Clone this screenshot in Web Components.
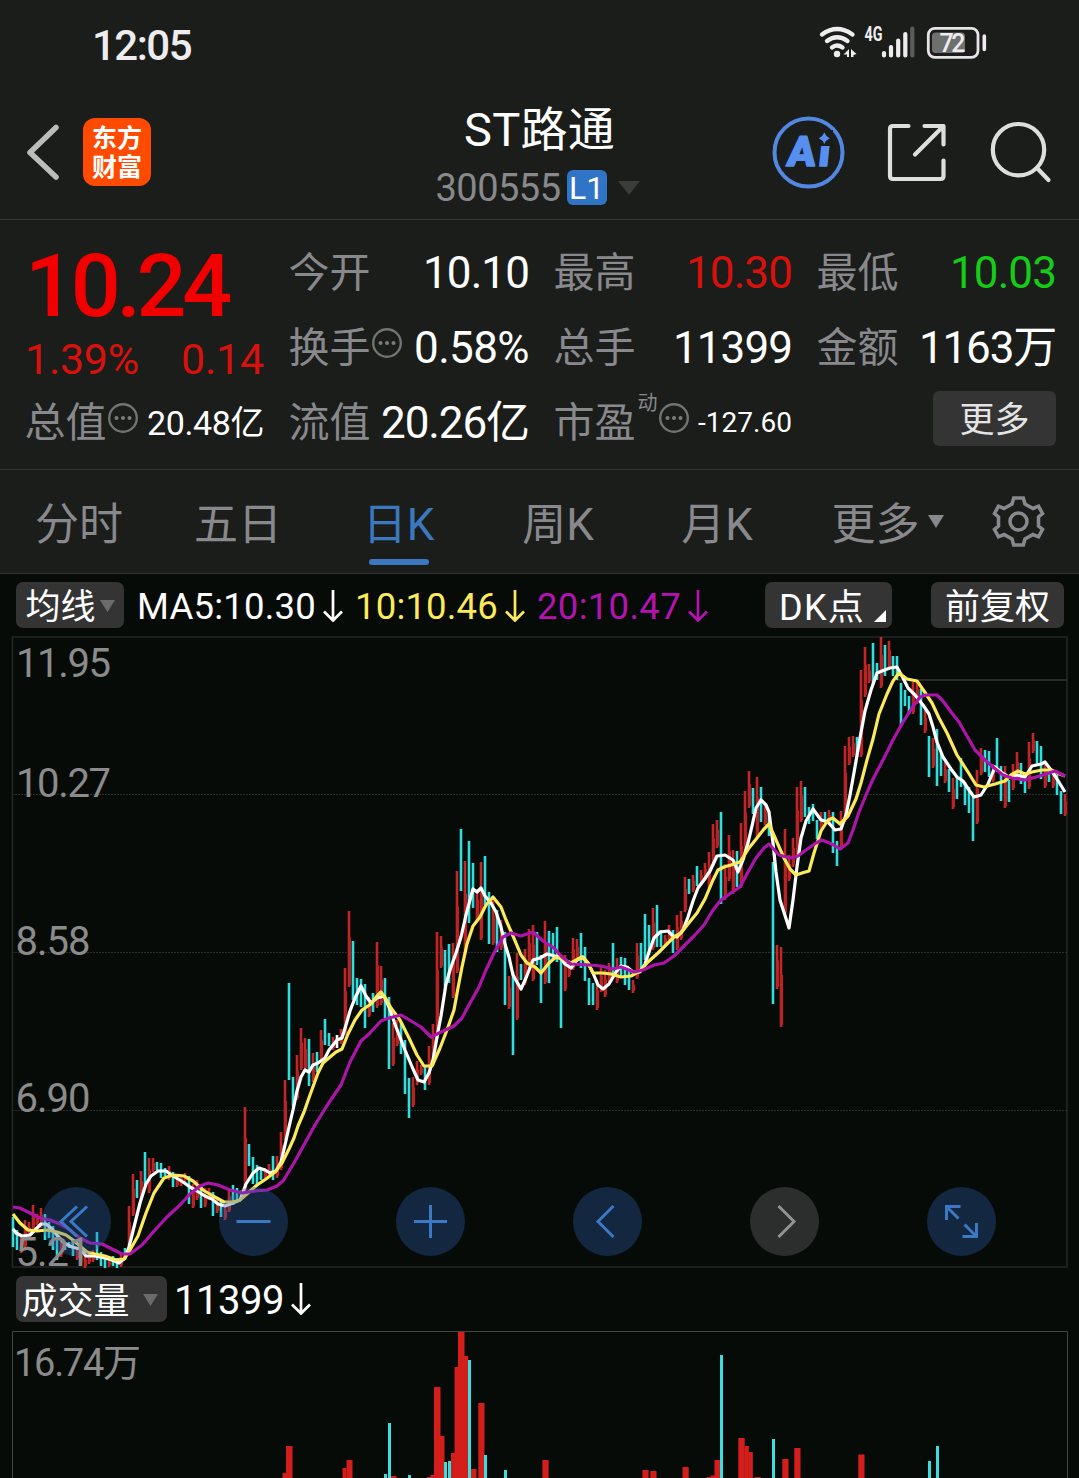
<!DOCTYPE html>
<html lang="zh-CN">
<head>
<meta charset="utf-8">
<title>ST路通 300555</title>
<style>
  body {
    margin: 0;
    background: #1a1d1a;
    color: #fff;
    font-family: Roboto, "Noto Sans CJK SC", sans-serif;
    overflow: hidden;
  }
</style>
</head>
<body>
<stock-app></stock-app>

<script>
/**
 * Creates a template from a html string.
 *
 * @param {string} html the markup and styles.
 * @returns {HTMLTemplateElement} the template.
 */
function makeTemplate (html) {
  const template = document.createElement('template')
  template.innerHTML = html
  return template
}

/**
 * Base class, clones the template of the sub class into a shadow root.
 */
class BaseElement extends HTMLElement {
  constructor () {
    super()
    this.attachShadow({ mode: 'open' })
      .appendChild(this.constructor.template.content.cloneNode(true))
  }
}

/**
 * fit-text: spreads its text over a given width with letter spacing.
 */
customElements.define('fit-text',
  class extends BaseElement {
    static template = makeTemplate(`
      <style>
        :host { display: inline-block; flex: none; white-space: nowrap; }
        span { display: inline-block; }
      </style>
      <span><slot></slot></span>
    `)

    connectedCallback () {
      const width = Number(this.getAttribute('w'))
      const span = this.shadowRoot.querySelector('span')
      const natural = span.getBoundingClientRect().width
      const count = this.textContent.length
      span.style.letterSpacing = ((width - natural) / count) + 'px'
      this.style.width = width + 'px'
    }
  }
)

/**
 * status-bar: clock, wifi, signal and battery.
 */
customElements.define('status-bar',
  class extends BaseElement {
    static template = makeTemplate(`
      <style>
        :host {
          display: flex;
          justify-content: space-between;
          height: 88px;
          padding: 0 88px 0 92px;
          color: #efecef;
        }
        .time { font-size: 42px; font-weight: 500; line-height: 91px; }
        svg { display: block; }
        text { font-family: Roboto, sans-serif; fill: #efecef; }
      </style>
      <fit-text class="time" w="99">12:05</fit-text>
      <svg width="179" height="88" viewBox="812 0 179 88" fill="none">
        <g stroke="#efecef" stroke-width="4.4" stroke-linecap="round">
          <path d="M822 34.5Q837 23.500 852.500 34.500"/>
          <path d="M827 41Q837 33.500 847.500 41"/>
          <path d="M832 47.500Q837 43.500 842.500 47.500"/>
        </g>
        <circle cx="837" cy="54" r="3.2" fill="#efecef"/>
        <path d="M843.500 54.500l5.500-5.500v8h-2v-2.500zM851 49l5.500 5-3 1v2h-2.500z" fill="#efecef"/>
        <text x="864.500" y="41" font-size="19.500" font-weight="700" textLength="18" lengthAdjust="spacingAndGlyphs">4G</text>
        <g stroke="#efecef" stroke-width="4.200" stroke-linecap="round">
          <path d="M884 53v2.500M891 47v8.500M898.200 40.500v15M905.300 34v21.500"/>
          <path d="M912.300 28.500v27" stroke="#5b5d5b"/>
        </g>
        <rect x="928.300" y="28.300" width="49.700" height="29" rx="6.500" stroke="#e6e4e6" stroke-width="2.800"/>
        <rect x="932" y="32.500" width="33" height="20.500" rx="3.500" fill="#6e706e"/>
        <path d="M984.300 36v13.500" stroke="#efecef" stroke-width="3.600" stroke-linecap="round"/>
        <text x="939.500" y="52" font-size="25" font-weight="500" textLength="26">72</text>
      </svg>
    `)
  }
)

/**
 * nav-bar: back, logo, stock name and tools.
 */
customElements.define('nav-bar',
  class extends BaseElement {
    static template = makeTemplate(`
      <style>
        :host {
          display: grid;
          grid-template-columns: 400px 1fr 400px;
          height: 131px;
          border-bottom: 1px solid #353735;
          box-sizing: content-box;
        }
        svg { display: block; }
        .left { display: flex; align-items: flex-start; }
        .logo {
          width: 68px;
          height: 68px;
          margin: 30px 0 0 19px;
          box-sizing: border-box;
          padding-top: 3.500px;
          border-radius: 12px;
          background: #ff4a02;
          font: 700 25px/29px "Noto Sans CJK SC", sans-serif;
          text-align: center;
        }
        .middle { display: flex; flex-direction: column; align-items: center; }
        .name { font-size: 47px; line-height: 60px; margin-top: 12px; }
        .code {
          display: flex;
          align-items: center;
          margin-top: 6px;
          height: 44px;
          font-size: 38px;
          line-height: 44px;
          color: #88888d;
        }
        .code fit-text { margin-left: -4px; }
        .level {
          width: 40px;
          height: 35px;
          margin: -2px 11px 0 6px;
          border-radius: 6px;
          background: #2f74c5;
          color: #fff;
          font-size: 32px;
          line-height: 36px;
          text-align: center;
        }
        .right { display: flex; justify-content: flex-end; }
        text { font: 900 42px Roboto, sans-serif; fill: #568ff0; stroke: #568ff0; stroke-width: 1.400; stroke-linejoin: round; }
      </style>
      <div class="left">
        <svg width="64" height="131" viewBox="0 88 64 131" fill="none">
          <path d="M56 127.500L30 152.500l26 24.500" stroke="#bcbcbc" stroke-width="5.500" stroke-linecap="round" stroke-linejoin="round"/>
        </svg>
        <div class="logo">东方<br>财富</div>
      </div>
      <div class="middle">
        <fit-text class="name" w="151">ST路通</fit-text>
        <div class="code">
          <fit-text w="125">300555</fit-text>
          <span class="level">L1</span>
          <svg width="22" height="14"><path d="M0 0h22l-11 14z" fill="#3b3c3b"/></svg>
        </div>
      </div>
      <div class="right">
        <svg width="320" height="131" viewBox="759 88 320 131" fill="none">
          <circle cx="808.500" cy="152.500" r="34" stroke="#5288e2" stroke-width="4"/>
          <text x="803.500" y="166" textLength="43" transform="skewX(-6)">Ai</text>
          <path d="M815 130h18v16h-18z" fill="#1a1d1a"/>
          <path d="M824.300 132.500q1.500 4 5.500 5.800q-4 1.800-5.500 5.800q-1.500-4-5.500-5.800q4-1.800 5.500-5.800z" fill="#568ff0"/>
          <g stroke="#dedede" stroke-width="4.200" stroke-linecap="round" stroke-linejoin="round">
            <path d="M908.500 126H893q-3 0-3 3v47q0 3 3 3h47.500q3 0 3-3v-15.500"/>
            <path d="M924.500 126h19v18.500M915 154.500l28-28"/>
            <circle cx="1018.500" cy="149.700" r="25.700"/>
            <path d="M1037 168l11.500 12"/>
          </g>
        </svg>
      </div>
    `)
  }
)

/**
 * info-dots: the round hint icon behind a label.
 */
customElements.define('info-dots',
  class extends BaseElement {
    static template = makeTemplate(`
      <style>
        :host { display: block; flex: none; width: 32px; height: 32px; }
        svg { display: block; }
      </style>
      <svg width="32" height="32">
        <circle cx="16" cy="16" r="13.800" fill="none" stroke="#727472" stroke-width="2.400"/>
        <g fill="#7b7d7b"><circle cx="9.500" cy="16" r="2"/><circle cx="16" cy="16" r="2"/><circle cx="22.500" cy="16" r="2"/></g>
      </svg>
    `)
  }
)

/**
 * quote-item: label, optional hint icon and a value.
 */
customElements.define('quote-item',
  class extends BaseElement {
    static template = makeTemplate(`
      <style>
        :host {
          display: flex;
          align-items: center;
          height: 75px;
          font-size: 44px;
          line-height: 60px;
        }
        .label { font-size: 41px; color: #88888d; white-space: nowrap; display: flex; margin: 3px 0 0 -.5px; }
        .icon { margin: -8px 0 0 .5px; }
        .value { display: flex; margin-left: auto; padding-top: 2px; }
      </style>
      <div class="label"><slot name="label"></slot></div>
      <div class="icon"><slot name="icon"></slot></div>
      <div class="value"><slot></slot></div>
    `)
  }
)

/**
 * quote-panel: the price and the figures of the day.
 */
customElements.define('quote-panel',
  class extends BaseElement {
    static template = makeTemplate(`
      <style>
        :host {
          display: grid;
          grid-template-columns: 239px 240px 238px 239px;
          column-gap: 25px;
          height: 235px;
          padding: 14px 0 0 25px;
          border-bottom: 1px solid #353735;
        }
        .price { display: block; font-size: 88px; font-weight: 500; line-height: 103px; height: 101px; color: #f20000; }
        .change { display: flex; justify-content: space-between; height: 49px; font-size: 43px; line-height: 48px; color: #d9110d; }
        .up { color: #d9110d; }
        .down { color: #16cc16; }
        .s { font-size: 34px; }
        .xs { font-size: 28px; }
        sup { font-size: 20px; line-height: 20px; margin: 0 0 0 2px; }
        .more {
          width: 123px;
          height: 55px;
          margin: 7px 0 0 116px;
          border-radius: 6px;
          background: #333433;
          color: #e4e4e4;
          font-size: 35px;
          line-height: 60px;
          text-align: center;
        }
      </style>
      <div>
        <fit-text class="price" w="203">10.24</fit-text>
        <div class="change"><fit-text w="114">1.39%</fit-text><fit-text w="83">0.14</fit-text></div>
        <quote-item><span slot="label">总值</span><info-dots slot="icon"></info-dots><fit-text class="s" w="117">20.48亿</fit-text></quote-item>
      </div>
      <div>
        <quote-item><span slot="label">今开</span><fit-text w="106">10.10</fit-text></quote-item>
        <quote-item><span slot="label">换手</span><info-dots slot="icon"></info-dots><fit-text w="115">0.58%</fit-text></quote-item>
        <quote-item><span slot="label">流值</span><fit-text w="148">20.26亿</fit-text></quote-item>
      </div>
      <div>
        <quote-item><span slot="label">最高</span><fit-text class="up" w="106">10.30</fit-text></quote-item>
        <quote-item><span slot="label">总手</span><fit-text w="119">11399</fit-text></quote-item>
        <quote-item><span slot="label">市盈</span><sup slot="label">动</sup><info-dots slot="icon"></info-dots><fit-text class="xs" w="94">-127.60</fit-text></quote-item>
      </div>
      <div>
        <quote-item><span slot="label">最低</span><fit-text class="down" w="106">10.03</fit-text></quote-item>
        <quote-item><span slot="label">金额</span><fit-text w="137">1163万</fit-text></quote-item>
        <div class="more">更多</div>
      </div>
    `)
  }
)

/**
 * period-tabs: chart periods and the settings gear.
 */
customElements.define('period-tabs',
  class extends BaseElement {
    static template = makeTemplate(`
      <style>
        :host {
          display: grid;
          grid-template-columns: 158px 160px 161px 158px 160px 181px 101px;
          height: 103px;
          border-bottom: 1px solid #353735;
          font-size: 44px;
          line-height: 111px;
          color: #88888d;
        }
        div { display: flex; justify-content: center; height: 103px; }
        .on { flex-direction: column; justify-content: flex-start; align-items: center; color: #3b78bf; }
        .on::after {
          content: "";
          flex: none;
          width: 60px;
          height: 6px;
          margin-top: -20px;
          border-radius: 3px;
          background: #3b78c0;
        }
        .on span { flex: none; height: 109px; }
        .more { align-items: flex-start; }
        .tri { margin: 45px 0 0 8px; }
        svg { display: block; }
      </style>
      <div>分时</div>
      <div>五日</div>
      <div class="on"><span>日K</span></div>
      <div>周K</div>
      <div>月K</div>
      <div class="more">更多<svg class="tri" width="16" height="13"><path d="M0 0h16l-8 13z" fill="#88888d"/></svg></div>
      <svg width="101" height="103" viewBox="978 470 101 103" fill="none" stroke="#88888d" stroke-width="3.600">
        <path d="M1013.700 498h9.600l1.700 6 8 4.500 5.500-2.300 4 7.300-4 3.500v9l4 3.500-4 7.300-5.500-2.300-8 4.500-1.700 6h-9.600l-1.700-6-8-4.500-5.500 2.300-4-7.300 4-3.500v-9l-4-3.500 4-7.300 5.500 2.300 8-4.500z"/>
        <circle cx="1018.500" cy="521.500" r="8.500"/>
      </svg>
    `)
  }
)

/**
 * chip-button: grey rounded button of the chart bars.
 */
customElements.define('chip-button',
  class extends BaseElement {
    static template = makeTemplate(`
      <style>
        :host {
          display: flex;
          flex: none;
          align-items: center;
          justify-content: center;
          box-sizing: border-box;
          height: 46px;
          padding-top: 5px;
          border-radius: 7px;
          background: #333433;
          color: #fff;
          font-size: 35px;
          line-height: 46px;
        }
      </style>
      <slot></slot>
    `)
  }
)

/**
 * down-arrow: trend arrow in the current colour.
 */
customElements.define('down-arrow',
  class extends BaseElement {
    static template = makeTemplate(`
      <style>
        :host { display: block; flex: none; width: 20px; height: 32px; }
        svg { display: block; }
      </style>
      <svg width="20" height="32" viewBox="0 0 20 32" fill="none" stroke="currentColor" stroke-width="2.700">
        <path d="M10 0v30M1 21.500l9 9 9-9"/>
      </svg>
    `)
  }
)

/**
 * ma-bar: moving averages above the candle chart.
 */
customElements.define('ma-bar',
  class extends BaseElement {
    static template = makeTemplate(`
      <style>
        :host {
          display: flex;
          align-items: center;
          height: 62px;
          padding: 0 15px 0 16px;
          font-size: 36.500px;
          line-height: 62px;
        }
        fit-text { padding-top: 4px; }
        down-arrow { margin: 1px 12px 0 7px; }
        .ma5 { width: 108px; margin-right: 13px; }
        .ma10 { color: #fdea5a; }
        .ma20 { color: #b313b0; }
        .dk { width: 127px; margin-left: auto; margin-right: 39px; font-size: 36px; }
        .dk fit-text { padding-top: 0; }
        .fq { width: 133px; }
      </style>
      <chip-button class="ma5">均线<svg style="margin:-3px 0 0 4px" width="15" height="12"><path d="M0 0h15l-7.500 12z" fill="#6a6c6a"/></svg></chip-button>
      <fit-text w="179">MA5:10.30</fit-text><down-arrow></down-arrow>
      <fit-text class="ma10" w="143">10:10.46</fit-text><down-arrow class="ma10"></down-arrow>
      <fit-text class="ma20" w="144">20:10.47</fit-text><down-arrow class="ma20"></down-arrow>
      <chip-button class="dk"><fit-text w="86">DK点</fit-text><svg style="margin:17px -8px 0 9px" width="12" height="12"><path d="M12 0v12H0z" fill="#fff"/></svg></chip-button>
      <chip-button class="fq">前复权</chip-button>
    `)
  }
)

// Candles: colour, high and low, one every 4px from x = 13. c = falling, r = rising, w = flat.
const CANDLES = `c1217-1247 c1230-1250 r1237-1253 r1220-1248 r1222-1238 r1205-1232 r1214-1225 r1208-1228 c1214-1240 c1222-1238
c1226-1250 c1235-1260 r1238-1257 c1244-1250 c1242-1248 c1240-1256 r1247-1260 r1250-1262 r1255-1268 r1253-1264
r1250-1262 c1232-1260 c1252-1266 c1256-1268 r1258-1267 c1256-1266 c1258-1268 r1255-1267 c1248-1260 r1206-1252
r1174-1216 c1180-1198 r1171-1200 c1152-1185 r1158-1193 r1158-1172 c1162-1170 c1163-1178 c1168-1176 r1166-1180
c1172-1187 r1175-1187 r1174-1186 r1173-1182 c1176-1204 r1184-1208 r1180-1200 c1186-1208 r1188-1207 r1188-1200
c1192-1216 r1200-1213 c1200-1217 r1205-1220 r1188-1212 c1185-1205 c1188-1202 r1190-1198 r1107-1195 c1144-1166
c1157-1184 c1165-1184 c1168-1180 r1168-1178 r1164-1178 c1156-1180 r1156-1178 r1132-1170 r1080-1140 c983-1080
c1077-1106 r1055-1100 r1028-1070 r1038-1070 c1039-1086 r1053-1082 c1052-1072 r1030-1060 c1019-1045 c1033-1046
r1037-1050 w1035-1048 r1029-1044 r968-1035 r911-987 c941-1000 c978-1005 c979-1007 c984-1028 r997-1017
c993-1012 r942-1008 r966-1005 c978-1018 c997-1069 r1023-1066 r1020-1046 c1022-1054 c1040-1094 c1078-1118
r1077-1107 r1061-1085 r1065-1075 c1066-1090 r1046-1085 r1024-1066 r932-1040 r936-968 c950-990 c944-983
r943-998 r871-973 c829-891 r861-955 c841-923 c863-908 r889-920 r862-940 c856-905 c892-944
r900-945 c910-952 r920-950 c932-1005 r976-1009 c972-1055 r953-1020 c964-980 r949-985 r929-970
r925-981 c932-965 c955-1003 r921-984 c931-983 c933-960 c927-962 c955-1028 r955-991 r960-977
r938-970 r939-962 c933-968 c947-981 c978-1005 c983-1005 r980-1010 r967-992 r970-997 r963-982
c943-978 r958-983 c957-978 c958-985 c968-990 r980-993 r943-979 c943-970 c914-960 c925-955
r908-950 c905-947 c930-947 r935-945 r925-940 c930-953 r915-950 r911-940 r877-912 c879-894
r875-892 c866-886 r870-885 r863-880 r852-888 r824-866 r820-848 c812-904 r864-900 r835-881
r850-894 c851-887 r823-888 r791-853 r771-808 c788-814 r777-837 c787-822 r805-825 c815-836
c862-1004 r945-989 r947-1027 r829-915 r855-881 r838-867 r787-855 r781-822 c787-817 c807-824
c804-821 c820-839 r812-830 c812-822 r810-825 c812-853 c841-866 r811-850 r746-822 r737-765
r736-757 c737-757 r670-757 r647-697 r664-683 c643-685 c663-680 r637-688 c645-676 r641-668
c656-676 c656-680 c683-726 c690-706 c696-714 r682-714 r681-704 c689-725 r710-733 c736-777
r738-768 c729-786 c753-776 r762-783 c769-792 r778-809 c777-799 c758-787 c782-805 c787-813
c797-841 r770-824 r748-775 c750-772 c751-777 r764-782 c738-772 c766-801 r766-808 c780-802
r764-790 r752-780 c763-784 c775-793 r742-789 r733-753 c741-764 c746-779 r765-788 c770-782
r770-788 c775-795 c791-814 r794-816`

const MA5 = `13,1229 16,1233 22,1236 30,1235 36,1229 41,1224 46,1224 52,1229 57,1235 64,1243 72,1247 80,1249 86,1256 95,1256 105,1258 112,1260 119,1263 125,1258 129,1247 134,1227 140,1203 146,1184 151,1176 158,1171 166,1171 173,1176 183,1182 190,1187 197,1191 205,1196 212,1199 218,1204 225,1206 233,1203 240,1200 246,1184 253,1173 259,1168 265,1170 270,1173 276,1171 281,1162 285,1145 289,1127 293,1110 297,1091 301,1077 305,1070 309,1072 313,1065 318,1063 325,1058 329,1050 337,1040 342,1038 346,1025 350,1011 355,998 361,986 366,996 371,1003 377,998 384,996 389,1007 396,1027 405,1050 413,1069 418,1080 424,1082 429,1073 433,1060 437,1037 441,1016 446,984 450,970 456,953 461,937 466,915 470,900 473,889 477,892 481,888 485,896 491,903 496,912 501,927 505,944 509,957 513,975 521,989 526,978 533,960 540,958 547,954 555,956 560,957 565,964 571,968 577,960 583,957 588,963 593,973 598,985 603,989 609,984 616,972 621,966 627,967 633,972 640,972 645,964 649,952 654,938 660,932 668,931 673,936 677,937 683,930 688,917 693,901 698,888 704,880 710,871 717,856 725,855 733,860 738,872 743,860 748,843 752,826 756,808 761,800 766,805 769,812 773,843 776,872 780,900 789,928 793,900 797,867 801,838 806,821 813,809 821,820 828,822 835,830 841,829 846,815 850,795 855,767 860,738 865,711 871,690 877,673 882,671 890,668 897,667 903,678 908,688 915,695 923,705 929,714 933,727 937,742 943,757 951,769 957,777 963,781 969,790 974,797 981,795 988,784 995,767 1001,772 1009,777 1017,775 1025,777 1032,766 1041,764 1045,762 1051,770 1057,779 1065,792`

const MA10 = `13,1214 20,1223 28,1230 37,1231 47,1230 57,1232 66,1235 73,1240 80,1246 87,1252 95,1254 105,1256 116,1260 124,1259 130,1250 138,1236 146,1213 154,1193 164,1178 173,1175 184,1176 193,1181 203,1190 213,1196 224,1202 233,1202 240,1200 248,1193 257,1185 266,1179 275,1172 282,1163 289,1149 294,1138 298,1126 304,1112 310,1095 318,1073 323,1063 330,1057 336,1052 342,1049 348,1034 355,1020 362,1010 371,1004 377,996 381,992 386,999 391,1008 400,1020 409,1038 417,1055 424,1066 432,1066 440,1048 447,1030 454,1010 458,988 462,967 467,944 473,926 480,917 486,905 493,897 501,907 506,920 513,936 521,955 527,963 535,967 541,973 549,963 556,957 564,960 571,963 578,959 582,957 588,963 593,973 602,973 611,974 621,977 631,976 640,971 648,962 658,953 668,943 674,937 681,933 688,924 697,913 705,899 713,880 718,870 724,867 731,865 740,862 749,848 757,838 764,829 769,824 776,840 784,858 790,869 796,875 802,873 809,871 814,853 821,831 828,820 833,818 840,824 848,816 856,799 861,783 867,760 873,739 879,714 887,694 893,681 899,673 907,679 917,681 924,691 932,703 939,718 947,733 957,755 968,772 976,785 984,787 995,784 1005,781 1011,775 1018,771 1025,774 1032,772 1042,770 1052,770 1057,773 1065,776`

const MA20 = `13,1207 20,1208 30,1213 40,1218 50,1220 60,1224 70,1230 80,1238 90,1243 102,1244 112,1249 122,1254 130,1254 142,1245 155,1230 167,1217 180,1205 190,1194 200,1186 208,1183 218,1185 230,1190 242,1193 255,1191 267,1190 277,1186 283,1181 294,1163 305,1143 315,1125 328,1104 341,1085 350,1062 361,1041 369,1034 381,1021 389,1018 401,1015 411,1021 421,1027 431,1037 441,1032 454,1026 462,1018 470,1003 479,987 486,970 494,953 503,937 511,933 521,936 533,932 543,941 554,948 562,957 571,964 590,965 601,966 613,969 621,967 634,972 643,970 654,965 664,963 674,956 684,946 694,936 704,925 713,910 721,900 731,893 740,887 748,872 756,858 764,848 769,844 779,855 790,858 798,856 806,850 816,843 822,840 832,844 840,849 848,843 853,830 859,812 866,795 873,779 883,760 893,740 903,722 912,708 920,697 926,695 937,695 943,701 951,712 959,722 967,736 975,750 985,760 993,767 1003,775 1012,778 1025,780 1036,777 1046,774 1055,771 1065,776`

/**
 * kline-chart: candles, averages, price labels and the round controls.
 */
customElements.define('kline-chart',
  class extends BaseElement {
    static template = makeTemplate(`
      <style>
        :host { display: block; position: relative; height: 635px; }
        svg { display: block; }
        .labels, .controls { position: absolute; inset: 0; }
        .labels { overflow: visible; }
        .labels text { font: 40px Roboto, sans-serif; fill: #8b8b8c; }
        .controls { display: flex; gap: 108px; padding: 551px 0 0 42px; }
        .controls svg {
          flex: none;
          border-radius: 50%;
          background: rgba(44, 94, 174, .34);
          fill: none;
          stroke: #3b79c4;
          stroke-width: 3;
        }
        .controls .off { background: rgba(130, 130, 130, .3); stroke: #929295; }
        .candles { stroke-width: 2.600; }
        .averages { fill: none; stroke-width: 3.200; stroke-linejoin: round; }
      </style>
      <svg width="1079" height="635" viewBox="0 636 1079 635">
        <g fill="none" stroke="#242624">
          <path d="M12.500 637h1054.500v630H12.500z" stroke-width="1.600"/>
          <path d="M12 794.500h1055M12 952.500h1055M12 1110.500h1055" stroke="#2c2e2c" stroke-dasharray="2 1"/>
          <path d="M897 680h170" stroke="#343634" stroke-width="1.600"/>
        </g>
        <g class="candles"></g>
        <g class="averages">
          <polyline stroke="#fff" points="${MA5}"/>
          <polyline stroke="#fdea5a" points="${MA10}"/>
          <polyline stroke="#ad14aa" points="${MA20}"/>
        </g>
      </svg>
      <div class="controls">
        <svg width="69" height="69" viewBox="-34.500 -34.500 69 69"><path d="M.5-15l-16 15 16 15M10.500-15L-5.500 0l16 15"/></svg>
        <svg width="69" height="69" viewBox="-34.500 -34.500 69 69"><path d="M-17 0h34"/></svg>
        <svg width="69" height="69" viewBox="-34.500 -34.500 69 69"><path d="M-16.500 0h33M0-16.500v33"/></svg>
        <svg width="69" height="69" viewBox="-34.500 -34.500 69 69"><path d="M6-15.500L-9.500 0 6 15.500"/></svg>
        <svg class="off" width="69" height="69" viewBox="-34.500 -34.500 69 69"><path d="M-6-15.500L9.500 0-6 15.500"/></svg>
        <svg width="69" height="69" viewBox="-34.500 -34.500 69 69"><path d="M-15-1.500V-15H-1M-15-15L-3-3M15 1.500V15H1M15 15L3 3"/></svg>
      </div>
      <svg class="labels" width="1079" height="635" viewBox="0 636 1079 635">
        <text x="16" y="676.500" textLength="95">11.95</text>
        <text x="16" y="796.500" textLength="95">10.27</text>
        <text x="15.500" y="954.500" textLength="75">8.58</text>
        <text x="15.500" y="1111.500" textLength="75">6.90</text>
        <text x="15.500" y="1266" textLength="75">5.21</text>
      </svg>
    `)

    connectedCallback () {
      const colors = { r: '#c42525', c: '#2fdede', w: '#fff' }
      this.shadowRoot.querySelector('.candles').innerHTML = CANDLES.split(/\s+/).map((candle, i) => {
        const [high, low] = candle.slice(1).split('-').map(Number)
        const x = 13 + i * 4
        const wick = `<path d="M${x} ${high}V${low}" stroke="${colors[candle[0]]}"/>`
        if (candle[0] !== 'r') {
          return wick
        }
        // Rising days have a body that is a bit wider than the wick.
        const top = high + (low - high) * 0.35
        return wick + `<path d="M${x + 0.8} ${top}V${low - 2}" stroke="#b82222"/>`
      }).join('')
    }
  }
)

// Volume bars: colour, left edge, width, top.
const VOLUMES = [
  ['r', 282.5, 4, 1473], ['r', 286, 6.500, 1446], ['r', 342.5, 4, 1468], ['r', 346.5, 6, 1460], ['c', 384, 3, 1474],
  ['c', 388, 3, 1423], ['r', 391, 5.500, 1476], ['c', 408, 3, 1475], ['r', 427, 4, 1477], ['r', 430.5, 4, 1475],
  ['r', 434, 6.500, 1387], ['r', 440, 4.500, 1436], ['c', 444, 3, 1462], ['c', 448, 3, 1461], ['r', 451, 4, 1453],
  ['r', 454.5, 4, 1367], ['r', 458, 6.500, 1332], ['r', 464, 4.200, 1356], ['c', 468, 3, 1360], ['r', 471, 5.500, 1469],
  ['r', 478.300, 6.200, 1403], ['c', 484, 3, 1455], ['c', 504, 3, 1470], ['r', 542.400, 6.200, 1460],
  ['r', 642.400, 6.200, 1470], ['r', 650.300, 6.200, 1471], ['r', 682.500, 6.200, 1467], ['r', 706.700, 4.200, 1477],
  ['r', 710.700, 4.200, 1475.5], ['r', 714.500, 5.500, 1460], ['c', 720, 3, 1355], ['r', 738.300, 6.400, 1438],
  ['r', 744.5, 4.300, 1446], ['r', 748.5, 4.300, 1452], ['r', 754.5, 6.200, 1477], ['c', 772, 3, 1439],
  ['r', 782.300, 6.200, 1459], ['r', 794.300, 6.200, 1448], ['r', 858.300, 6.200, 1454.5], ['c', 928, 3, 1461],
  ['c', 936, 3, 1446]
]

/**
 * volume-chart: title row and volume bars.
 */
customElements.define('volume-chart',
  class extends BaseElement {
    static template = makeTemplate(`
      <style>
        :host { display: block; }
        .head { display: flex; align-items: center; height: 56px; padding-left: 16px; font-size: 40px; line-height: 56px; }
        chip-button { width: 151px; margin-right: 7px; font-size: 36px; }
        .head fit-text { padding-top: 3px; }
        down-arrow { margin-left: 7px; }
        svg { display: block; }
        text { font: 38px Roboto, "Noto Sans CJK SC", sans-serif; fill: #8b8b8c; }
      </style>
      <div class="head">
        <chip-button>成交量<svg style="margin:-4px 4px 0 13px" width="15" height="12"><path d="M0 0h15l-7.500 12z" fill="#6a6c6a"/></svg></chip-button>
        <fit-text w="110">11399</fit-text><down-arrow></down-arrow>
      </div>
      <svg width="1079" height="151" viewBox="0 1327 1079 151">
        <path d="M12.500 1478V1331.500h1055V1478" fill="none" stroke="#434543"/>
        <g class="bars"></g>
        <text x="14" y="1376" textLength="127">16.74万</text>
      </svg>
    `)

    connectedCallback () {
      this.shadowRoot.querySelector('.bars').innerHTML = VOLUMES.map(([c, x, w, y]) =>
        `<rect x="${x}" y="${y}" width="${w}" height="${1478 - y}" fill="${c === 'r' ? '#d31e1c' : '#3bdede'}"/>`
      ).join('')
    }
  }
)

/**
 * stock-app: the whole page.
 */
customElements.define('stock-app',
  class extends BaseElement {
    static template = makeTemplate(`
      <style>
        :host { display: block; width: 1079px; height: 1478px; overflow: hidden; }
        .charts { background: #070b08; }
      </style>
      <status-bar></status-bar>
      <nav-bar></nav-bar>
      <quote-panel></quote-panel>
      <period-tabs></period-tabs>
      <div class="charts">
        <ma-bar></ma-bar>
        <kline-chart></kline-chart>
        <volume-chart></volume-chart>
      </div>
    `)
  }
)
</script>
</body>
</html>
